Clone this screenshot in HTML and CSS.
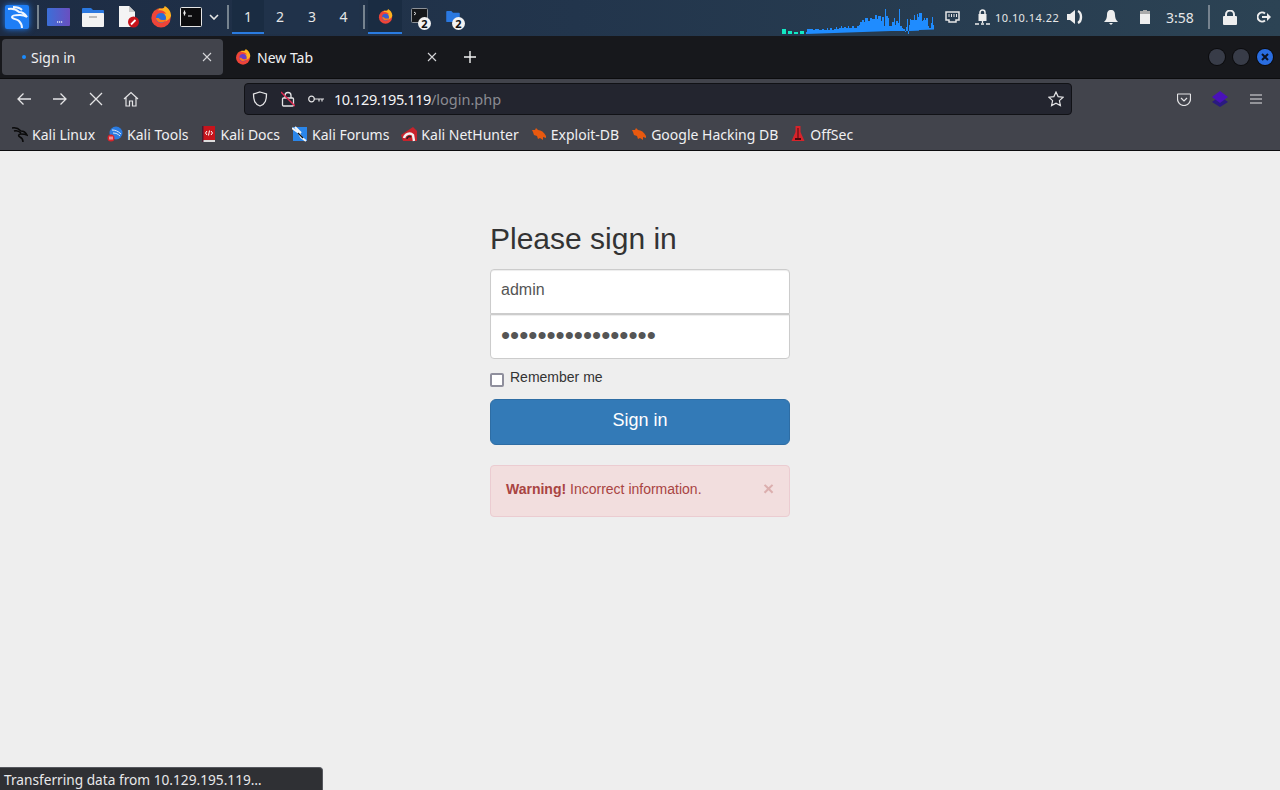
FILE: index.html
```html
<!DOCTYPE html>
<html lang="en">
<head>
    <meta charset="UTF-8">
    <title>Sign in</title>
    <link rel="stylesheet" href="styles.css">
</head>
<body>
    <svg class="defs" width="0" height="0">
        <symbol id="firefox" viewBox="0 0 24 24">
            <circle cx="12" cy="13" r="10.500" fill="#ee4438"/>
            <path d="M3 8C5 5 7 3 10 3c-1 1-1 2-1 2 3-1 7 0 9 4-1-1-3-1-4 0 3 1 4 5 2 8 3-1 6-3 7-6 0-5-3-9-7-11 0 2-2 3-4 3C9 2 5 4 3 8z" fill="#ffb21f"/>
            <circle cx="12" cy="13" r="5.500" fill="currentColor"/>
            <path d="M6.500 13c1 6 9 7 12 1-2 2-7 2-9-1z" fill="#ff7a1a"/>
        </symbol>
        <symbol id="bug" viewBox="0 0 16 16">
            <path d="M1 4l3 0 1-2 2 2c3 0 6 2 8 6v2l-3-1 0 3-3-2-2 1-1-3-3-1-1-3z" fill="#e8590f"/>
        </symbol>
    </svg>

    <div class="taskbar">
        <div class="kali-btn">
            <svg width="24" height="24" viewBox="0 0 24 24"><rect width="24" height="24" rx="2" fill="#1f7ef5"/><path d="M3 4c5-1 9 1 11 3 3 0 6 2 8 5-3-2-5-2-7-2-4 0-8 0-8 2s5 2 7 4 3 3 3 7M8 2c4 0 7 1 9 3" fill="none" stroke="#f0f6ff" stroke-width="2"/></svg>
        </div>
        <span class="task-sep sep-first"></span>
        <div class="launcher">
            <svg width="23" height="18" viewBox="0 0 23 18"><defs><linearGradient id="desk" x1="0" x2="1"><stop offset="0" stop-color="#3b6fd8"/><stop offset="1" stop-color="#6a4fc0"/></linearGradient></defs><rect width="23" height="18" rx="1" fill="url(#desk)"/><path d="M10 14h1.200M12 14h1.200M14 14h1.200" stroke="#dfe6f5" stroke-width="1.500"/></svg>
            <svg width="22" height="20" viewBox="0 0 22 20"><path d="M0 2a1 1 0 0 1 1-1h8l2 2h10a1 1 0 0 1 1 1v3H0z" fill="#2a78e0"/><rect y="6" width="22" height="14" rx="1" fill="#f2f2f2"/><rect x="7" y="9" width="8" height="2" fill="#bbb"/></svg>
            <svg class="launch-doc" width="21" height="22" viewBox="0 0 21 22"><path d="M1 0h10l6 6v15H1z" fill="#f4f4f4"/><path d="M11 0l6 6h-6z" fill="#c9c9c9"/><circle cx="15.500" cy="16" r="5.500" fill="#c8141c"/><path d="M13 18.500l4.500-4.500" stroke="#fff" stroke-width="1.800"/></svg>
            <svg class="launch-fox" width="22" height="22"><use href="#firefox"/></svg>
            <svg class="launch-term" width="22" height="20" viewBox="0 0 22 20"><rect x=".5" y=".5" width="21" height="19" rx="1" fill="#0c0c0e" stroke="#e6e6e6"/><path d="M3 6h3M4.500 3.500v5M8 9h4" stroke="#eee" stroke-width="1.200"/></svg>
            <svg class="chevron" width="10" height="6" viewBox="0 0 10 6"><path d="M1 1l4 4 4-4" fill="none" stroke="#e6e6e6" stroke-width="1.600"/></svg>
        </div>
        <span class="task-sep"></span>
        <div class="workspaces">
            <span class="ws active">1</span>
            <span class="ws">2</span>
            <span class="ws">3</span>
            <span class="ws">4</span>
        </div>
        <span class="task-sep sep-win"></span>
        <div class="windows">
            <span class="win active"><svg class="fox-blue" width="15" height="15"><use href="#firefox"/></svg></span>
            <span class="win">
                <svg class="win-term" width="17" height="15" viewBox="0 0 17 15"><rect x=".5" y=".5" width="16" height="14" rx="1" fill="#15171a" stroke="#8d9298"/><path d="M3 4l2 1.500L3 7" fill="none" stroke="#ddd"/></svg>
                <span class="win-count">2</span>
            </span>
            <span class="win">
                <svg width="14" height="11" viewBox="0 0 16 13"><path d="M0 1a1 1 0 0 1 1-1h5l2 2h7a1 1 0 0 1 1 1v9a1 1 0 0 1-1 1H1a1 1 0 0 1-1-1z" fill="#2a78e0"/></svg>
                <span class="win-count">2</span>
            </span>
        </div>

        <svg class="graph" width="152" height="34" viewBox="782 0 152 34">
            <path d="M782 34V29h4v5zM788 34V31h4v3zM794 34V32h4v2zM800 34V31h4v3z" fill="#12e8c4"/>
            <path d="M806 34V32h1v-3h6v1h2v-1h4v1h3v-1h2v1h3v-2h1v2h2v-2h2v2h2v-1h2v-2h1v2h2v-1h2v-2h1v2h2v-1h2v1h2v-2h1v2h3v-2h2v2h3v-2h2v-1h1v-3h2v-2h2v2h1v-4h3v3h2v-3h2v1h3v-4h2v4h1v-3h3v5h1V17h2v9h1V9h1v7h2V18h1v8h3v-4h2v-4h1v7h1v-4h2v2h1V9h1v17h2v2h1v1h2v3h1v-5h1v-8h1v15h1V25h1v-6h1v1h3v-5h1v5h2v-6h1v3h1v-4h3v8h1v-1h1v-2h1v2h1v-2h2v8h1v2h2v-5h1v-6h1v8h2v-4h2v-3h1v3h2v-4h1v2h2v-3h1v5h1v3h1v2h1v3z" fill="#1f8cff"/>
        </svg>

        <div class="tray">
            <svg class="tray-net" width="15" height="13" viewBox="0 0 15 13"><path d="M1 1h13v8h-3v2H4V9H1z" fill="none" stroke="#e6e6e6" stroke-width="1.500"/><path d="M4 3v3M6.500 3v3M9 3v3M11.500 3v3" stroke="#e6e6e6"/></svg>
            <svg class="tray-vpn" width="15" height="17" viewBox="0 0 15 17"><rect x="3.500" y="5" width="8" height="7" fill="#eee"/><path d="M5 5V3.500a2.500 2.500 0 0 1 5 0V5" fill="none" stroke="#eee" stroke-width="1.500"/><path d="M7.500 12v2M0 15h4M6 15h3M11 15h4" stroke="#eee" stroke-width="1.300"/></svg>
            <span class="tray-ip">10.10.14.22</span>
            <svg class="tray-vol" width="18" height="16" viewBox="0 0 18 16"><path d="M0 5h3l5-4v14l-5-4H0z" fill="#eee"/><path d="M11 2c4 2 4 10 0 12" fill="none" stroke="#eee" stroke-width="2.400"/></svg>
            <svg class="tray-bell" width="14" height="15" viewBox="0 0 14 15"><path d="M7 0c3 0 4 2 4 5 0 3 1 5 3 7H0c2-2 3-4 3-7 0-3 1-5 4-5z" fill="#eee"/><path d="M5 13h4l-2 2z" fill="#eee"/></svg>
            <svg class="tray-bat" width="10" height="14" viewBox="0 0 10 14"><rect x="3" width="4" height="2" fill="#aaa"/><rect y="1" width="10" height="3" fill="#aaa"/><rect y="4" width="10" height="10" fill="#eee"/></svg>
            <span class="tray-time">3:58</span>
            <span class="task-sep sep-tray"></span>
            <svg class="tray-lock" width="14" height="15" viewBox="0 0 14 15"><rect y="6" width="14" height="9" rx="1" fill="#eee"/><path d="M3 7V4.500a4 4 0 0 1 8 0V7" fill="none" stroke="#eee" stroke-width="2"/></svg>
            <svg class="tray-out" width="14" height="12" viewBox="0 0 14 12"><path d="M8 2.500A4.500 4.500 0 1 0 8 9.500" fill="none" stroke="#eee" stroke-width="2"/><path d="M5 5h5V2l4 4-4 4V7H5z" fill="#eee"/></svg>
        </div>
    </div>

    <div class="tabstrip">
        <div class="tab tab-active">
            <span class="tab-dot"></span>
            <span class="tab-title">Sign in</span>
            <svg class="tab-close" width="10" height="10" viewBox="0 0 10 10"><path d="M1 1l8 8M9 1l-8 8" stroke="#d5d6d9" stroke-width="1.100"/></svg>
        </div>
        <div class="tab tab-idle">
            <svg class="tab-icon" width="16" height="16"><use href="#firefox"/></svg>
            <span class="tab-title">New Tab</span>
            <svg class="tab-close" width="10" height="10" viewBox="0 0 10 10"><path d="M1 1l8 8M9 1l-8 8" stroke="#d5d6d9" stroke-width="1.100"/></svg>
        </div>
        <svg class="new-tab" width="12" height="12" viewBox="0 0 12 12"><path d="M6 0v12M0 6h12" stroke="#f2f2f2" stroke-width="1.400"/></svg>
        <div class="win-controls">
            <span class="win-dot"></span>
            <span class="win-dot"></span>
            <span class="win-dot win-close"><svg width="8" height="8" viewBox="0 0 8 8"><path d="M1 1l6 6M7 1L1 7" stroke="#0c1220" stroke-width="2"/></svg></span>
        </div>
    </div>

    <div class="navbar">
        <svg class="nav-icon" width="16" height="14" viewBox="0 0 16 14"><path d="M15 7H2M7.500 1.500L2 7l5.500 5.500" fill="none" stroke="#e4e4e6" stroke-width="1.300"/></svg>
        <svg class="nav-icon" width="16" height="14" viewBox="0 0 16 14"><path d="M1 7h13M8.500 1.500L14 7l-5.500 5.500" fill="none" stroke="#e4e4e6" stroke-width="1.300"/></svg>
        <svg class="nav-icon" width="16" height="14" viewBox="0 0 16 14"><path d="M2 1l12 12M14 1L2 13" fill="none" stroke="#e4e4e6" stroke-width="1.300"/></svg>
        <svg class="nav-icon nav-home" width="16" height="16" viewBox="0 0 16 16"><path d="M1 8l7-6.500L15 8M3 6.500V15h3.500v-5h3v5H13V6.500" fill="none" stroke="#e4e4e6" stroke-width="1.200"/></svg>
        <div class="urlbar">
            <svg class="url-shield" width="16" height="16" viewBox="0 0 16 16"><path d="M8 1l6.500 2c0 6-1 10-6.500 12C2.500 13 1.500 9 1.500 3z" fill="none" stroke="#e4e4e6" stroke-width="1.300"/></svg>
            <svg class="url-lock" width="14" height="16" viewBox="0 0 14 16"><rect x="1.500" y="7" width="11" height="8" rx="1" fill="none" stroke="#e4e4e6" stroke-width="1.300"/><path d="M4 7V4.500a3 3 0 0 1 6 0V7" fill="none" stroke="#e4e4e6" stroke-width="1.300"/><path d="M0 1l14 14" stroke="#e22850" stroke-width="1.300"/></svg>
            <svg class="url-key" width="16" height="8" viewBox="0 0 16 8"><circle cx="3.500" cy="4" r="2.800" fill="none" stroke="#e4e4e6" stroke-width="1.200"/><path d="M6 4h10M11 4v2.500M14 4v2.500" stroke="#e4e4e6" stroke-width="1.200"/></svg>
            <span class="url-text"><span class="url-host">10.129.195.119</span><span class="url-path">/login.php</span></span>
            <svg class="url-star" width="16" height="16" viewBox="0 0 16 16"><path d="M8 1l2.100 4.600 5 .6-3.700 3.400 1 4.900L8 12.100l-4.400 2.400 1-4.900L.9 6.200l5-.6z" fill="none" stroke="#e4e4e6" stroke-width="1.200"/></svg>
        </div>
        <svg class="nav-pocket" width="14" height="13" viewBox="0 0 14 13"><path d="M1 1h12a.5.500 0 0 1 .5.500V6a6.500 6.500 0 0 1-13 0V1.500A.5.500 0 0 1 1 1z" fill="none" stroke="#e4e4e6" stroke-width="1.200"/><path d="M4 5l3 3 3-3" fill="none" stroke="#e4e4e6" stroke-width="1.200"/></svg>
        <svg class="nav-ext" width="16" height="16" viewBox="0 0 16 16"><path d="M8 5l8 6-8 5-8-5z" fill="#2a1a80"/><path d="M8 0l8 6-8 6-8-6z" fill="#4a12b8"/></svg>
        <svg class="nav-menu" width="12" height="10" viewBox="0 0 12 10"><path d="M0 1h12M0 5h12M0 9h12" stroke="#e4e4e6" stroke-width="1.200"/></svg>
    </div>

    <div class="bookmarks">
        <a class="bm">
            <svg width="16" height="16" viewBox="0 0 16 16"><path d="M0 2c4-1 7 1 9 3 3 0 5 2 6 4-2-1-4-1-6-1-3 0-3 2-1 3s3 2 3 5M2 5c3-1 5 0 7 2" fill="none" stroke="#0a0a0a" stroke-width="1.500"/></svg>
            Kali Linux
        </a>
        <a class="bm">
            <svg width="16" height="16" viewBox="0 0 16 16"><circle cx="9" cy="7" r="6.500" fill="#2a7be0"/><path d="M5 4c3 0 6 1 9 4M6 7c3 0 5 1 7 3" fill="none" stroke="#dbe9fb" stroke-width="1"/><circle cx="4" cy="12" r="3.500" fill="#d8232a"/><path d="M3 10.500v3M5 10.500v3" stroke="#fff"/></svg>
            Kali Tools
        </a>
        <a class="bm">
            <svg width="16" height="16" viewBox="0 0 16 16"><rect x="1" width="13" height="15" fill="#c8141c"/><rect x="1" y="14" width="13" height="2" fill="#ddd"/><rect x="1" width="1.500" height="16" fill="#4a1a30"/><path d="M6 5L4.500 7 6 9M10 5l1.500 2L10 9M8.500 4.500L7.500 9.500" fill="none" stroke="#fff"/></svg>
            Kali Docs
        </a>
        <a class="bm">
            <svg width="16" height="16" viewBox="0 0 16 16"><path d="M1 1h14v14H1z" fill="#2a86ea"/><path d="M0 2l7 5 2 4 5 4M3 1l6 6" fill="none" stroke="#f2f5f8" stroke-width="2"/><path d="M6 7l5 5" stroke="#111" stroke-width="1.200"/></svg>
            Kali Forums
        </a>
        <a class="bm">
            <svg width="16" height="16" viewBox="0 0 16 16"><path d="M0 9L12 1l4 4v10H2z" fill="#c8232c"/><path d="M3 12c1-4 6-6 9-3l1 6" fill="none" stroke="#f2f2f2" stroke-width="2.400"/><path d="M6 13c0-2 2-3 4-2" fill="none" stroke="#222" stroke-width="1.500"/></svg>
            Kali NetHunter
        </a>
        <a class="bm">
            <svg width="16" height="16"><use href="#bug"/></svg>
            Exploit-DB
        </a>
        <a class="bm">
            <svg width="16" height="16"><use href="#bug"/></svg>
            Google Hacking DB
        </a>
        <a class="bm">
            <svg width="16" height="16" viewBox="0 0 16 16"><path d="M5.500 0h5v6l4 9h-13l4-9z" fill="#d8232a"/><path d="M7.500 2h1v10h-1zM5 12h6v2H5z" fill="#4a0a0e"/></svg>
            OffSec
        </a>
    </div>

    <div class="page">
        <form class="form-signin">
            <h2 class="form-signin-heading">Please sign in</h2>
            <input class="form-control input-top" type="text" value="admin">
            <input class="form-control input-bottom" type="password" value="aaaaaaaaaaaaaaaaa">
            <label class="checkbox-row">
                <input class="remember" type="checkbox">
                <span>Remember me</span>
            </label>
            <button class="btn-signin" type="button">Sign in</button>
            <div class="alert">
                <span><strong>Warning!</strong> Incorrect information.</span>
                <span class="alert-close">&times;</span>
            </div>
        </form>
    </div>

    <div class="statusbar">Transferring data from 10.129.195.119…</div>
</body>
</html>
```

FILE: styles.css
```css
html, body {
    margin: 0;
    padding: 0;
}
body {
    display: flex;
    flex-direction: column;
    width: 1280px;
    height: 790px;
    overflow: hidden;
    position: relative;
    font-family: "Noto Sans", sans-serif;
    background: #eeeeee;
}
.defs {
    position: absolute;
}

/* panel */
.taskbar {
    display: flex;
    align-items: center;
    height: 34px;
    padding-bottom: 2px;
    flex: none;
    background: linear-gradient(90deg, #1d2c44 0%, #22354c 45%, #2c4354 100%);
    color: #e6e6e6;
}
.kali-btn {
    display: flex;
    margin-left: 5px;
    filter: drop-shadow(0 0 3px #1f7bf2);
}
.task-sep {
    flex: none;
    width: 2px;
    height: 24px;
    margin: 0 3px;
    background: #76838f;
}
.sep-first {
    margin-left: 8px;
}
.sep-win {
    margin-left: 4px;
}
.launcher {
    display: flex;
    align-items: center;
    width: 182px;
    padding-left: 5px;
    box-sizing: border-box;
    gap: 12px;
}
.launch-doc {
    margin-left: 2px;
}
.launch-fox {
    margin-left: -1px;
}
.launch-term {
    margin-left: -4px;
}
.launcher .chevron {
    margin-left: -5px;
}
.workspaces {
    display: flex;
    height: 34px;
    font-size: 14px;
}
.ws {
    width: 32px;
    height: 32px;
    line-height: 33px;
    text-align: center;
    border-bottom: 2px solid transparent;
    background: #20324a;
}
.ws.active {
    background: #1a2c42;
    border-bottom-color: #2a7be0;
}
.workspaces .ws:last-child {
    width: 31px;
}
.windows {
    display: flex;
    height: 34px;
    margin-left: 0;
}
.win {
    position: relative;
    display: flex;
    align-items: center;
    justify-content: center;
    width: 34px;
    height: 32px;
    border-bottom: 2px solid transparent;
}
.win.active {
    background: #1a2c42;
    border-bottom-color: #2a7be0;
}
.fox-blue {
    color: #3a5fd0;
}
.launch-fox {
    color: #2a6cd8;
}
.tab-icon {
    color: #6a3cc8;
}
.win-term {
    margin-top: -2px;
}
.win-count {
    position: absolute;
    left: 16px;
    top: 17px;
    width: 13px;
    height: 13px;
    border-radius: 50%;
    background: #f2f2f2;
    color: #111;
    font: bold 11px/13px "Noto Sans", sans-serif;
    text-align: center;
}
.graph {
    position: absolute;
    left: 782px;
    top: 0;
}
.tray {
    position: absolute;
    left: 945px;
    top: 0;
    height: 34px;
    display: flex;
    align-items: center;
}
.tray-vpn {
    margin-left: 15px;
}
.tray-ip {
    margin-left: 5px;
    font-size: 11px;
    letter-spacing: .45px;
    width: 67px;
}
.tray-vol {
    margin-left: 5px;
}
.tray-bell {
    margin-left: 19px;
}
.tray-bat {
    margin-left: 22px;
}
.tray-time {
    margin-left: 16px;
    font-size: 14px;
    width: 30px;
}
.sep-tray {
    margin: 0 0 0 12px;
}
.tray-lock {
    margin-left: 13px;
}
.tray-out {
    margin-left: 20px;
}

/* browser chrome */
.tabstrip {
    position: relative;
    display: flex;
    align-items: center;
    flex: none;
    height: 43px;
    background: #17181c;
    color: #f0f0f2;
    font-size: 14px;
    box-sizing: border-box;
    padding-left: 2px;
    border-bottom: 1px solid #0c0c0e;
}
.tab {
    display: flex;
    align-items: center;
    width: 221px;
    height: 36px;
    margin-right: 2px;
    box-sizing: border-box;
    border-radius: 4px;
    padding-left: 10px;
}
.tab-active {
    background: #42444c;
    padding-left: 20px;
}
.tab-dot {
    width: 4px;
    height: 4px;
    border-radius: 50%;
    background: #1a8cff;
    margin-right: 5px;
}
.tab-icon {
    margin-right: 6px;
}
.tab-title {
    flex: 1;
}
.tab-close {
    margin-right: 11px;
}
.tab-idle .tab-close {
    margin-right: 9px;
}
.new-tab {
    margin-left: 16px;
}
.win-controls {
    display: flex;
    gap: 8px;
    margin-left: auto;
    margin-right: 7px;
}
.win-dot {
    display: flex;
    align-items: center;
    justify-content: center;
    width: 16px;
    height: 16px;
    border-radius: 50%;
    background: #383c48;
    box-shadow: 0 0 0 1px #0c0c0e;
}
.win-close {
    background: #2a6de0;
}
.navbar {
    display: flex;
    align-items: center;
    flex: none;
    height: 41px;
    padding-bottom: 1px;
    box-sizing: border-box;
    background: #42444c;
}
.nav-icon {
    flex: none;
    margin-right: 20px;
}
.nav-icon:first-child {
    margin-left: 16px;
}
.nav-home {
    margin-left: -1px;
    margin-right: 105px;
}
.urlbar {
    display: flex;
    align-items: center;
    flex: none;
    width: 828px;
    height: 32px;
    box-sizing: border-box;
    background: #23252f;
    border: 1px solid #111216;
    border-radius: 4px;
    padding: 0 7px;
    color: #f4f4f6;
    font-size: 14.5px;
}
.url-shield {
    margin-right: 13px;
}
.url-lock {
    margin-right: 13px;
}
.url-key {
    margin-right: 10px;
}
.url-host {
    letter-spacing: -.43px;
}
.url-path {
    color: #8a8b92;
}
.url-star {
    margin-left: auto;
}
.nav-pocket {
    margin-left: 105px;
}
.nav-ext {
    margin-left: 21px;
}
.nav-menu {
    margin-left: 22px;
}
.bookmarks {
    display: flex;
    align-items: center;
    flex: none;
    height: 31px;
    padding: 0 0 2px 12px;
    box-sizing: border-box;
    gap: 12px;
    background: #42444c;
    border-bottom: 1px solid #0c0c0e;
    color: #f0f0f2;
    font-size: 14px;
}
.bm {
    display: flex;
    align-items: center;
    gap: 4px;
}

/* the page itself */
.page {
    flex: 1;
    display: flex;
    justify-content: center;
    color: #333;
    font-family: "Liberation Sans", Arial, sans-serif;
}
.form-signin {
    width: 300px;
    padding-top: 70px;
}
.form-signin-heading {
    margin: 0 0 12px;
    font-size: 30px;
    font-weight: 500;
    line-height: 36px;
}
.form-control {
    display: block;
    width: 100%;
    height: 45px;
    box-sizing: border-box;
    padding: 8px 10px 12px;
    border: 1px solid #ccc;
    background: #fff;
    color: #555;
    font-family: inherit;
    font-size: 16px;
    box-shadow: inset 0 1px 1px rgba(0, 0, 0, .075);
    outline: none;
}
.input-top {
    border-radius: 4px 4px 0 0;
}
.input-bottom {
    border-radius: 0 0 4px 4px;
    font-size: 26px;
    padding: 0 10px 3px;
}
.checkbox-row {
    display: flex;
    align-items: flex-start;
    height: 40px;
    padding-top: 10px;
    box-sizing: border-box;
    font-size: 14px;
    line-height: 16px;
}
.remember {
    appearance: none;
    flex: none;
    width: 14px;
    height: 14px;
    box-sizing: border-box;
    margin: 4px 6px 0 0;
    border: 2px solid #8f8f9d;
    border-radius: 2px;
    background: #fff;
}
.btn-signin {
    display: block;
    width: 100%;
    height: 46px;
    padding: 0 0 4px;
    border: 1px solid #2e6da4;
    border-radius: 6px;
    background: #337ab7;
    color: #fff;
    font-family: inherit;
    font-size: 18px;
}
.alert {
    display: flex;
    justify-content: space-between;
    align-items: center;
    height: 52px;
    margin-top: 20px;
    box-sizing: border-box;
    padding: 0 15px 4px;
    border: 1px solid #ebccd1;
    border-radius: 4px;
    background: #f2dede;
    color: #a94442;
    font-size: 14px;
}
.alert-close {
    color: #a94442;
    opacity: .3;
    font-size: 19px;
    font-weight: bold;
    line-height: 16px;
}
.statusbar {
    position: absolute;
    left: 0;
    bottom: 0;
    width: 323px;
    height: 23px;
    box-sizing: border-box;
    padding-left: 4px;
    border: 1px solid #56585e;
    border-width: 1px 1px 0 0;
    border-radius: 0 4px 0 0;
    background: #2f3034;
    color: #e8e8ea;
    font-size: 13.7px;
    line-height: 23px;
}
```
